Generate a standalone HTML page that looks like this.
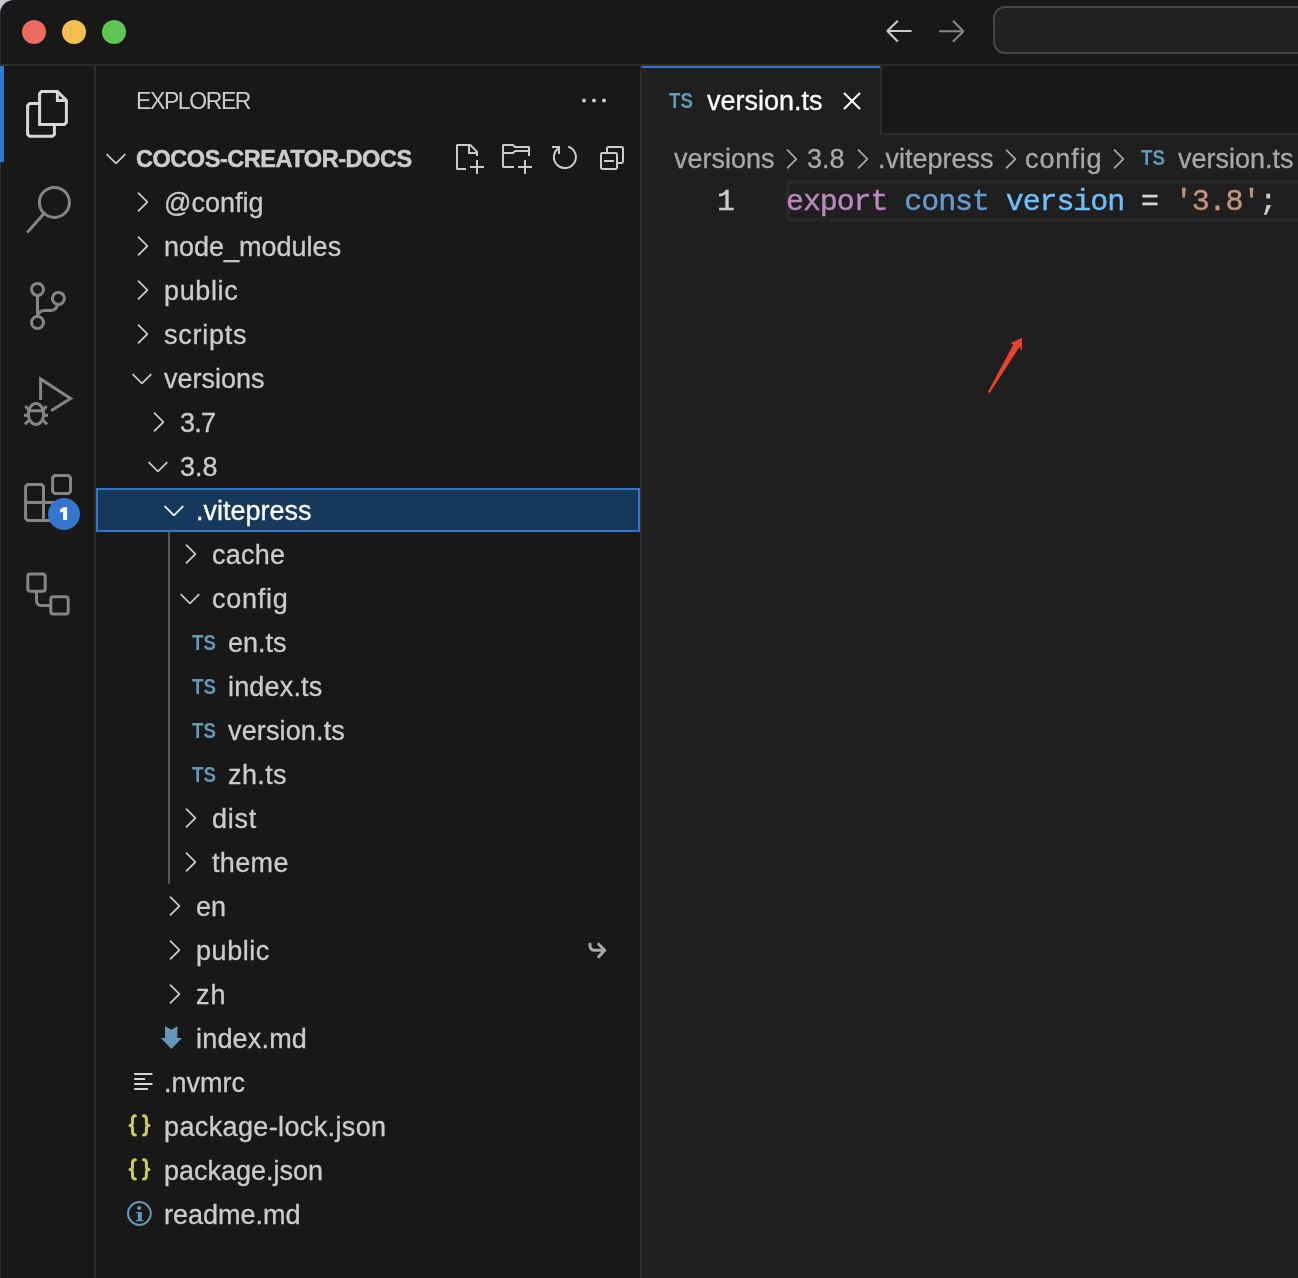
<!DOCTYPE html>
<html><head><meta charset="utf-8">
<style>
html,body{margin:0;padding:0;}
body{width:1298px;height:1278px;overflow:hidden;background:#c4c7cc;position:relative;font-family:"Liberation Sans",sans-serif;}
#win{will-change:transform;position:absolute;left:0;top:0;width:1310px;height:1290px;background:#181818;border-top-left-radius:14px;overflow:hidden;}
.abs{position:absolute;}
.lbl{position:absolute;font-size:27px;line-height:44px;height:44px;color:#cccccc;white-space:nowrap;letter-spacing:0px;-webkit-text-stroke:0.3px currentColor;}
.tsic{position:absolute;font-size:21.5px;line-height:44px;height:44px;color:#6398b7;font-weight:bold;letter-spacing:0px;transform:scaleX(0.87);transform-origin:0 0;}
.jsic{position:absolute;font-size:22px;line-height:44px;height:44px;color:#cbcb5a;font-family:"Liberation Mono",monospace;font-weight:bold;}
.infoi{position:absolute;font-size:20px;line-height:44px;height:44px;color:#6398b7;font-family:"Liberation Serif",serif;font-weight:bold;}
svg.ov{position:absolute;left:0;top:0;}
.code{position:absolute;font-family:"Liberation Mono",monospace;font-size:30px;line-height:42px;white-space:pre;letter-spacing:-1.1px;-webkit-text-stroke:0.4px currentColor;}
.bc{position:absolute;font-size:27px;line-height:48px;color:#a9a9a9;white-space:nowrap;letter-spacing:0px;-webkit-text-stroke:0.3px currentColor;}
</style></head>
<body>
<div id="win">
  <div class="abs" style="left:0;top:13px;width:1px;height:1290px;background:#2e2e2e"></div>
  <div class="abs" style="left:0;top:64px;width:1310px;height:2px;background:#2b2b2b"></div>
  <div class="abs" style="left:993px;top:6px;width:340px;height:44px;border:2px solid #464646;border-radius:12px;background:#222222"></div>
  <div class="abs" style="left:94px;top:66px;width:2px;height:1300px;background:#2b2b2b"></div>
  <div class="abs" style="left:0;top:66px;width:4px;height:96px;background:#3376cd"></div>
  <div class="abs" style="left:640px;top:66px;width:2px;height:1300px;background:#2b2b2b"></div>
  <div class="abs" style="left:642px;top:66px;width:700px;height:1300px;background:#1f1f1f"></div>
  <div class="abs" style="left:882px;top:66px;width:500px;height:67px;background:#181818"></div>
  <div class="abs" style="left:882px;top:133px;width:500px;height:2px;background:#2b2b2b"></div>
  <div class="abs" style="left:880px;top:66px;width:2px;height:69px;background:#2b2b2b"></div>
  <div class="abs" style="left:642px;top:66px;width:238px;height:2px;background:#3376cd"></div>
  <div class="abs" style="left:96px;top:488px;width:544px;height:44px;box-sizing:border-box;border:2px solid #3376cd;background:#16385b"></div>
  <div class="abs" style="left:168px;top:532px;width:2px;height:352px;background:#585858"></div>
  <div class="abs" style="left:786px;top:180px;width:600px;height:42px;box-sizing:border-box;border:4px solid #282828;"></div>

  <!-- sidebar title -->
  <div class="abs" style="left:136px;top:81px;font-size:23px;line-height:40px;color:#cccccc;letter-spacing:-1.4px;">EXPLORER</div>
  <div class="abs" style="left:136px;top:137px;font-size:23.5px;line-height:44px;color:#cccccc;font-weight:bold;letter-spacing:-0.45px;-webkit-text-stroke:0.5px currentColor;">COCOS-CREATOR-DOCS</div>

  <div class="lbl" style="left:164px;top:181px;color:#cccccc">@config</div>
<div class="lbl" style="left:164px;top:225px;color:#cccccc">node_modules</div>
<div class="lbl" style="left:164px;top:269px;color:#cccccc;letter-spacing:0.64px">public</div>
<div class="lbl" style="left:164px;top:313px;color:#cccccc;letter-spacing:0.73px">scripts</div>
<div class="lbl" style="left:164px;top:357px;color:#cccccc">versions</div>
<div class="lbl" style="left:180px;top:401px;color:#cccccc;letter-spacing:-0.8px">3.7</div>
<div class="lbl" style="left:180px;top:445px;color:#cccccc">3.8</div>
<div class="lbl" style="left:196px;top:489px;color:#ffffff">.vitepress</div>
<div class="lbl" style="left:212px;top:533px;color:#cccccc;letter-spacing:0.25px">cache</div>
<div class="lbl" style="left:212px;top:577px;color:#cccccc;letter-spacing:0.74px">config</div>
<div class="lbl" style="left:228px;top:621px;color:#cccccc">en.ts</div>
<div class="tsic" style="left:192px;top:620.5px">TS</div>
<div class="lbl" style="left:228px;top:665px;color:#cccccc;letter-spacing:0.17px">index.ts</div>
<div class="tsic" style="left:192px;top:664.5px">TS</div>
<div class="lbl" style="left:228px;top:709px;color:#cccccc;letter-spacing:0.14px">version.ts</div>
<div class="tsic" style="left:192px;top:708.5px">TS</div>
<div class="lbl" style="left:228px;top:753px;color:#cccccc;letter-spacing:0.4px">zh.ts</div>
<div class="tsic" style="left:192px;top:752.5px">TS</div>
<div class="lbl" style="left:212px;top:797px;color:#cccccc;letter-spacing:0.73px">dist</div>
<div class="lbl" style="left:212px;top:841px;color:#cccccc;letter-spacing:0.35px">theme</div>
<div class="lbl" style="left:196px;top:885px;color:#cccccc">en</div>
<div class="lbl" style="left:196px;top:929px;color:#cccccc;letter-spacing:0.56px">public</div>
<div class="lbl" style="left:196px;top:973px;color:#cccccc;letter-spacing:1.1px">zh</div>
<div class="lbl" style="left:196px;top:1017px;color:#cccccc;letter-spacing:0.19px">index.md</div>
<div class="lbl" style="left:164px;top:1061px;color:#cccccc">.nvmrc</div>
<div class="lbl" style="left:164px;top:1105px;color:#cccccc;letter-spacing:0.37px">package-lock.json</div>
<div class="lbl" style="left:164px;top:1149px;color:#cccccc">package.json</div>
<div class="lbl" style="left:164px;top:1193px;color:#cccccc">readme.md</div>

  <!-- tab -->
  <div class="tsic" style="left:669px;top:79px;">TS</div>
  <div class="abs" style="left:707px;top:79px;font-size:27px;line-height:44px;color:#ffffff;letter-spacing:0px;-webkit-text-stroke:0.3px currentColor;">version.ts</div>

  <!-- breadcrumbs -->
  <div class="bc" style="left:674px;top:135px;">versions</div>
  <div class="bc" style="left:807px;top:135px;">3.8</div>
  <div class="bc" style="left:878px;top:135px;">.vitepress</div>
  <div class="bc" style="left:1025px;top:135px;letter-spacing:0.9px;">config</div>
  <div class="tsic" style="left:1141px;top:135.5px;">TS</div>
  <div class="bc" style="left:1178px;top:135px;">version.ts</div>

  <!-- code -->
  <div class="code" style="left:717px;top:181px;color:#cccccc">1</div>
  <div class="code" style="left:786px;top:181px;"><span style="color:#bc89bd">export</span> <span style="color:#679ad1">const</span> <span style="color:#6fbff9">version</span> <span style="color:#d4d4d4">=</span> <span style="color:#c5947c">'3.8'</span><span style="color:#cccccc">;</span></div>

  <svg class="ov" width="1298" height="1278" viewBox="0 0 1298 1278">
    <!-- traffic lights -->
    <circle cx="34" cy="32" r="12" fill="#ec6a5e"/>
    <circle cx="74" cy="32" r="12" fill="#f4bf4f"/>
    <circle cx="114" cy="32" r="12" fill="#61c554"/>
    <!-- nav arrows -->
    <path transform="translate(882.5 13.5) scale(2.08)" d="M7 3.093l-5 5V8.8l5 5 .707-.707-4.146-4.147H14v-1H3.56L7.707 3.8 7 3.093z" fill="#cccccc"/>
    <path transform="translate(935 13.5) scale(2.08)" d="M9 13.887l5-5V8.18L9 3.18l-.707.707 4.146 4.147H2v1h10.44L8.293 13.18l.707.707z" fill="#858585"/>

    <!-- activity: explorer -->
    <g fill="none" stroke="#d7d7d7" stroke-width="3" stroke-linejoin="miter">
      <path d="M39.6 124.4 V93.5 L41.5 91.5 H57.4 L66.4 100.4 V122.4 L64.4 124.4 Z"/>
      <path d="M57.4 91.5 V100.4 H66.4"/>
      <path d="M39.6 103.6 H29.6 L27.6 105.6 V134.3 L29.6 136.3 H52.4 L54.4 134.3 V124.4"/>
    </g>
    <!-- search -->
    <g fill="none" stroke="#868686" stroke-width="3">
      <circle cx="54.4" cy="202.4" r="15"/>
      <path d="M43.6 214 L27.2 232.4"/>
    </g>
    <!-- source control -->
    <g fill="none" stroke="#868686" stroke-width="3">
      <circle cx="37.5" cy="289.4" r="6"/>
      <circle cx="58.4" cy="298.4" r="6"/>
      <circle cx="37.5" cy="322.5" r="6"/>
      <path d="M37.5 295.4 V316.5"/>
      <path d="M57.8 304.3 C56.8 308 54.5 310.4 51 310.4 H44.5 C41 310.4 38.5 312.5 37.5 316"/>
    </g>
    <!-- run & debug -->
    <g fill="none" stroke="#868686" stroke-width="3">
      <path d="M40.6 400 V379 L70.6 398.4 L51.1 410.8"/>
      <ellipse cx="36" cy="414" rx="7.6" ry="10.6"/>
      <path d="M28.4 410.8 H43.6"/>
      <path d="M25.3 406.2 L29 409.8 M46.7 406.2 L43 409.8 M23.9 415.3 H28 M44 415.3 H48 M25 424.2 L29 420.2 M47 424.2 L43 420.2"/>
    </g>
    <!-- extensions -->
    <g fill="none" stroke="#868686" stroke-width="3" stroke-linejoin="miter">
      <path d="M54.6 475.6 H68.5 L70.5 477.6 V491.5 L68.5 493.5 H54.6 L52.6 491.5 V477.6 Z"/>
      <path d="M43.5 502.5 V486.5 L41.5 484.5 H27.6 L25.6 486.5 V518.5 L27.6 520.5 H60"/>
      <path d="M25.6 502.5 H60 M43.5 502.5 V520.5"/>
    </g>
    <circle cx="64" cy="514" r="16" fill="#3376cd"/>
    <polygon points="63.1,507.2 67.1,507.2 67.1,519.9 63.1,519.9 63.1,511.4 60.1,512.7 60.1,509.4" fill="#ffffff"/>
    <!-- remote / timeline -->
    <g fill="none" stroke="#868686" stroke-width="3">
      <rect x="27.8" y="573.9" width="17.4" height="17.4" rx="2.5"/>
      <rect x="50.8" y="596.7" width="17.4" height="17.4" rx="2.5"/>
      <path d="M36.5 591.3 V600 C36.5 603 38 605.4 41 605.4 H50.8"/>
    </g>

    <!-- explorer header actions -->
    <path transform="translate(578 84.6) scale(2)" d="M4 8a1 1 0 1 1-2 0 1 1 0 0 1 2 0zm5 0a1 1 0 1 1-2 0 1 1 0 0 1 2 0zm5 0a1 1 0 1 1-2 0 1 1 0 0 1 2 0z" fill="#cccccc"/>
    <path transform="translate(100 142) scale(2)" d="M7.976 10.072l4.357-4.357.62.618L8.284 11h-.618L3 6.333l.619-.618 4.357 4.357z" fill="#cccccc"/>
    <path transform="translate(452 142) scale(2)" d="M9.5 1.1l3.4 3.5.1.4v2h-1V6H8V2H3v11h4v1H2.5l-.5-.5v-12l.5-.5h6.7l.3.1zM9 2v3h2.9L9 2zm4 14h-1v-3H9v-1h3V9h1v3h3v1h-3v3z" fill="#cccccc"/>
    <path transform="translate(500 142) scale(2)" d="M14.5 2H7.71l-.85-.85L6.51 1h-5l-.5.5v11l.5.5H7v-1H1.99V6h4.49l.35-.15.86-.86H14v1.5l-.001.51h1.011V2.5L14.5 2zm-.51 2h-6.5l-.35.15-.86.86H2v-3h4.29l.85.85.36.15H14l-.01.99zM13 16h-1v-3H9v-1h3V9h1v3h3v1h-3v3z" fill="#cccccc"/>
    <g transform="translate(548 142) scale(2)" fill="none" stroke="#cccccc" stroke-width="1">
      <path d="M10.1 2.3 A5.5 5.5 0 1 1 5.5 2.9"/>
      <path d="M2 2.5 H6 M5.5 2.5 V6"/>
    </g>
    <g transform="translate(596 142) scale(2)" fill="none" stroke="#cccccc" stroke-width="1">
      <path d="M5.5 5.5 V3.2 C5.5 2.8 5.8 2.5 6.2 2.5 H12.8 C13.2 2.5 13.5 2.8 13.5 3.2 V9.8 C13.5 10.2 13.2 10.5 12.8 10.5 H10.5"/>
      <rect x="2.5" y="5.5" width="8" height="8" rx="0.7"/>
      <path d="M4 9.5 H9"/>
    </g>

    <!-- tab close -->
    <path transform="translate(836 85) scale(2)" d="M8 8.707l3.646 3.647.708-.707L8.707 8l3.647-3.646-.707-.708L8 7.293 4.354 3.646l-.707.708L7.293 8l-3.646 3.646.707.708L8 8.707z" fill="#ffffff"/>

    <!-- breadcrumb chevrons -->
    <path transform="translate(775 143) scale(2)" d="M10.072 8.024L5.715 3.667l.618-.62L11 7.716v.618L6.333 13l-.618-.619 4.357-4.357z" fill="#a9a9a9"/>
    <path transform="translate(846 143) scale(2)" d="M10.072 8.024L5.715 3.667l.618-.62L11 7.716v.618L6.333 13l-.618-.619 4.357-4.357z" fill="#a9a9a9"/>
    <path transform="translate(994 143) scale(2)" d="M10.072 8.024L5.715 3.667l.618-.62L11 7.716v.618L6.333 13l-.618-.619 4.357-4.357z" fill="#a9a9a9"/>
    <path transform="translate(1102 143) scale(2)" d="M10.072 8.024L5.715 3.667l.618-.62L11 7.716v.618L6.333 13l-.618-.619 4.357-4.357z" fill="#a9a9a9"/>

    <!-- symlink arrow on public -->
    <g fill="none" stroke="#a8a8a8" stroke-width="3" stroke-linecap="round" stroke-linejoin="round">
      <path d="M590 944 V946 C590 948.5 591.8 950.2 594.5 950.2 H604.5"/>
      <path d="M598.7 944.2 L604.8 950.2 L598.7 956.6"/>
    </g>

    <!-- annotation arrow -->
    <polygon points="988.3,391.6 1013.5,344.6 1010.8,343.3 1021.9,337.9 1021.9,350.2 1019.4,346.8 989.9,392.6 988.8,392.8" fill="#e8432b" stroke="#e8432b" stroke-width="0.3" stroke-linejoin="round"/>
    <path transform="translate(126 186) scale(2)" d="M10.072 8.024L5.715 3.667l.618-.62L11 7.716v.618L6.333 13l-.618-.619 4.357-4.357z" fill="#cccccc"/>
<path transform="translate(126 230) scale(2)" d="M10.072 8.024L5.715 3.667l.618-.62L11 7.716v.618L6.333 13l-.618-.619 4.357-4.357z" fill="#cccccc"/>
<path transform="translate(126 274) scale(2)" d="M10.072 8.024L5.715 3.667l.618-.62L11 7.716v.618L6.333 13l-.618-.619 4.357-4.357z" fill="#cccccc"/>
<path transform="translate(126 318) scale(2)" d="M10.072 8.024L5.715 3.667l.618-.62L11 7.716v.618L6.333 13l-.618-.619 4.357-4.357z" fill="#cccccc"/>
<path transform="translate(126 362) scale(2)" d="M7.976 10.072l4.357-4.357.62.618L8.284 11h-.618L3 6.333l.619-.618 4.357 4.357z" fill="#cccccc"/>
<path transform="translate(142 406) scale(2)" d="M10.072 8.024L5.715 3.667l.618-.62L11 7.716v.618L6.333 13l-.618-.619 4.357-4.357z" fill="#cccccc"/>
<path transform="translate(142 450) scale(2)" d="M7.976 10.072l4.357-4.357.62.618L8.284 11h-.618L3 6.333l.619-.618 4.357 4.357z" fill="#cccccc"/>
<path transform="translate(158 494) scale(2)" d="M7.976 10.072l4.357-4.357.62.618L8.284 11h-.618L3 6.333l.619-.618 4.357 4.357z" fill="#ffffff"/>
<path transform="translate(174 538) scale(2)" d="M10.072 8.024L5.715 3.667l.618-.62L11 7.716v.618L6.333 13l-.618-.619 4.357-4.357z" fill="#cccccc"/>
<path transform="translate(174 582) scale(2)" d="M7.976 10.072l4.357-4.357.62.618L8.284 11h-.618L3 6.333l.619-.618 4.357 4.357z" fill="#cccccc"/>
<path transform="translate(174 802) scale(2)" d="M10.072 8.024L5.715 3.667l.618-.62L11 7.716v.618L6.333 13l-.618-.619 4.357-4.357z" fill="#cccccc"/>
<path transform="translate(174 846) scale(2)" d="M10.072 8.024L5.715 3.667l.618-.62L11 7.716v.618L6.333 13l-.618-.619 4.357-4.357z" fill="#cccccc"/>
<path transform="translate(158 890) scale(2)" d="M10.072 8.024L5.715 3.667l.618-.62L11 7.716v.618L6.333 13l-.618-.619 4.357-4.357z" fill="#cccccc"/>
<path transform="translate(158 934) scale(2)" d="M10.072 8.024L5.715 3.667l.618-.62L11 7.716v.618L6.333 13l-.618-.619 4.357-4.357z" fill="#cccccc"/>
<path transform="translate(158 978) scale(2)" d="M10.072 8.024L5.715 3.667l.618-.62L11 7.716v.618L6.333 13l-.618-.619 4.357-4.357z" fill="#cccccc"/>
<polygon fill="#6398b7" points="165.0,1026.0 171.4,1029.8 177.35,1026.2 177.35,1038.1 182,1038.1 171.4,1048.9 160.8,1038.1 165.0,1038.1"/>
<line x1="135" y1="1074" x2="151.6" y2="1074" stroke="#d4d7d6" stroke-width="2.2" stroke-linecap="round"/>
<line x1="135" y1="1079" x2="144.3" y2="1079" stroke="#d4d7d6" stroke-width="2.2" stroke-linecap="round"/>
<line x1="135" y1="1084" x2="151.6" y2="1084" stroke="#d4d7d6" stroke-width="2.2" stroke-linecap="round"/>
<line x1="135" y1="1089" x2="147.2" y2="1089" stroke="#d4d7d6" stroke-width="2.2" stroke-linecap="round"/>
<path d="M135.4 1115.7 C133.2 1115.7 132.5 1117 132.5 1119 V1122.5 C132.5 1124.3 131.6 1125.4 130 1125.4 C131.6 1125.4 132.5 1126.5 132.5 1128.3 V1131.8 C132.5 1133.8 133.2 1135.1 135.4 1135.1" fill="none" stroke="#cbcb5a" stroke-width="3" stroke-linecap="round" stroke-linejoin="round"/>
<path transform="translate(278.9 0) scale(-1 1)" d="M135.4 1115.7 C133.2 1115.7 132.5 1117 132.5 1119 V1122.5 C132.5 1124.3 131.6 1125.4 130 1125.4 C131.6 1125.4 132.5 1126.5 132.5 1128.3 V1131.8 C132.5 1133.8 133.2 1135.1 135.4 1135.1" fill="none" stroke="#cbcb5a" stroke-width="3" stroke-linecap="round" stroke-linejoin="round"/>
<path d="M135.4 1159.7 C133.2 1159.7 132.5 1161 132.5 1163 V1166.5 C132.5 1168.3 131.6 1169.4 130 1169.4 C131.6 1169.4 132.5 1170.5 132.5 1172.3 V1175.8 C132.5 1177.8 133.2 1179.1 135.4 1179.1" fill="none" stroke="#cbcb5a" stroke-width="3" stroke-linecap="round" stroke-linejoin="round"/>
<path transform="translate(278.9 0) scale(-1 1)" d="M135.4 1159.7 C133.2 1159.7 132.5 1161 132.5 1163 V1166.5 C132.5 1168.3 131.6 1169.4 130 1169.4 C131.6 1169.4 132.5 1170.5 132.5 1172.3 V1175.8 C132.5 1177.8 133.2 1179.1 135.4 1179.1" fill="none" stroke="#cbcb5a" stroke-width="3" stroke-linecap="round" stroke-linejoin="round"/>
<circle cx="139.4" cy="1213.5" r="11.4" fill="none" stroke="#6398b7" stroke-width="2"/>
<circle cx="139.15" cy="1208" r="2.1" fill="#6398b7"/>
<path d="M135.8 1212 H141.8 V1220 H143.3 V1221.2 H135.8 V1220 H137.8 V1213.1 H135.8 Z" fill="#6398b7"/>
  </svg>
  
</div>
</body></html>
